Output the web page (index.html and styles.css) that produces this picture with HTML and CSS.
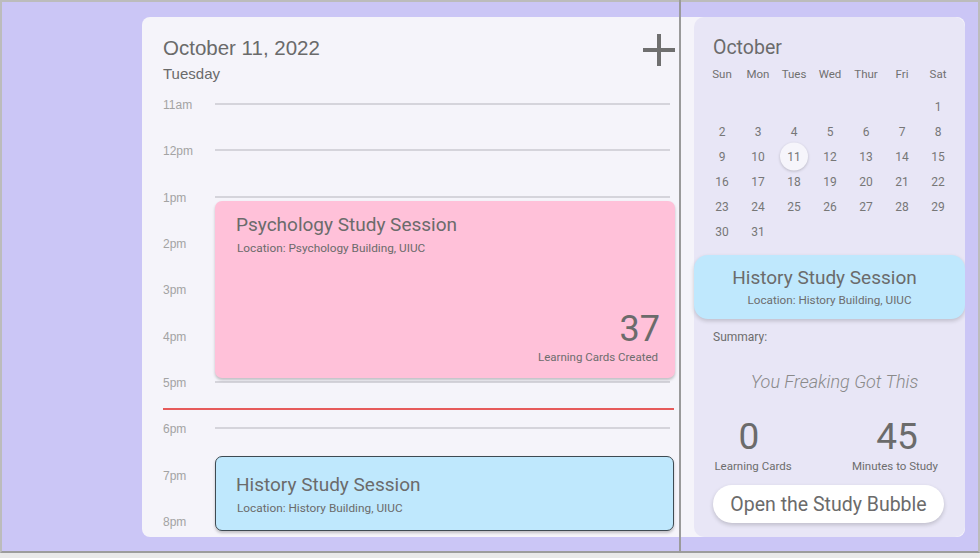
FILE: index.html
```html
<!DOCTYPE html>
<html>
<head>
<meta charset="utf-8">
<link rel="stylesheet" href="styles.css">
</head>
<body>
<div class="screen">
  <div class="device">
    <div class="card">
      <section class="day">
        <header class="day-head">
          <div class="day-titles">
            <h1 class="date">October 11, 2022</h1>
            <div class="weekday">Tuesday</div>
          </div>
          <svg class="plus" width="34" height="34" viewBox="0 0 34 34"><path d="M17 1V33M1 17H33" stroke="#6f6f6f" stroke-width="4" fill="none"/></svg>
        </header>
        <div class="timeline">
          <div class="hour"><span class="hl">11am</span><span class="hline"></span></div>
          <div class="hour"><span class="hl">12pm</span><span class="hline"></span></div>
          <div class="hour"><span class="hl">1pm</span><span class="hline"></span></div>
          <div class="hour"><span class="hl">2pm</span><span class="hline"></span></div>
          <div class="hour"><span class="hl">3pm</span><span class="hline"></span></div>
          <div class="hour"><span class="hl">4pm</span><span class="hline"></span></div>
          <div class="hour"><span class="hl">5pm</span><span class="hline"></span></div>
          <div class="hour"><span class="hl">6pm</span><span class="hline"></span></div>
          <div class="hour"><span class="hl">7pm</span><span class="hline"></span></div>
          <div class="hour"><span class="hl">8pm</span><span class="hline"></span></div>
          <div class="now"></div>
          <div class="event psych">
            <div class="ev-title">Psychology Study Session</div>
            <div class="ev-loc">Location: Psychology Building, UIUC</div>
            <div class="ev-stat">
              <div class="ev-num">37</div>
              <div class="ev-lbl">Learning Cards Created</div>
            </div>
          </div>
          <div class="event hist">
            <div class="ev-title">History Study Session</div>
            <div class="ev-loc">Location: History Building, UIUC</div>
          </div>
        </div>
      </section>
      <aside class="side">
        <div class="month">October</div>
        <div class="cal">
          <span class="wd">Sun</span><span class="wd">Mon</span><span class="wd">Tues</span><span class="wd">Wed</span><span class="wd">Thur</span><span class="wd">Fri</span><span class="wd">Sat</span>
          <span></span><span></span><span></span><span></span><span></span><span></span><span class="d">1</span>
          <span class="d">2</span><span class="d">3</span><span class="d">4</span><span class="d">5</span><span class="d">6</span><span class="d">7</span><span class="d">8</span>
          <span class="d">9</span><span class="d">10</span><span class="d sel">11</span><span class="d">12</span><span class="d">13</span><span class="d">14</span><span class="d">15</span>
          <span class="d">16</span><span class="d">17</span><span class="d">18</span><span class="d">19</span><span class="d">20</span><span class="d">21</span><span class="d">22</span>
          <span class="d">23</span><span class="d">24</span><span class="d">25</span><span class="d">26</span><span class="d">27</span><span class="d">28</span><span class="d">29</span>
          <span class="d">30</span><span class="d">31</span>
        </div>
        <div class="next">
          <div class="next-title">History Study Session</div>
          <div class="next-loc">Location: History Building, UIUC</div>
        </div>
        <div class="summary">Summary:</div>
        <div class="quote">You Freaking Got This</div>
        <div class="stats">
          <div class="stat s1"><div class="num">0</div><div class="lbl">Learning Cards</div></div>
          <div class="stat s2"><div class="num">45</div><div class="lbl">Minutes to Study</div></div>
        </div>
        <button class="bubble">Open the Study Bubble</button>
      </aside>
    </div>
    <div class="divider"></div>
  </div>
</div>
</body>
</html>
```
FILE: styles.css
```css
* { box-sizing: border-box; }
html, body { margin: 0; padding: 0; }
body { background: #e9e9e9; font-family: Roboto, "Liberation Sans", sans-serif; color: #6d6d6d; }
.screen { width: 980px; height: 558px; position: relative; overflow: hidden; }
.device {
  width: 980px; height: 553px;
  border: 2px solid #bcbcbc; border-bottom-color: #9c9c9c;
  background: #cbc6f6;
  position: relative;
  padding: 15px 0 0 140px;
}
.card {
  width: 823px; height: 520px;
  background: #f5f4fa;
  border-radius: 8px;
  display: flex;
  overflow: hidden;
}
.day { width: 552px; padding-left: 21px; }
.day-head { display: flex; justify-content: space-between; align-items: flex-start; padding-top: 19px; height: 64px; }
.date { margin: 0; font-family: "Liberation Sans", Arial, sans-serif; font-weight: 400; font-size: 20.5px; line-height: 24px; color: #6a6a6a; }
.weekday { font-family: "Liberation Sans", Arial, sans-serif; font-size: 15px; line-height: 18px; margin-top: 5px; color: #6a6a6a; }
.plus { margin-top: -3px; margin-right: 18px; }
.timeline { position: relative; width: 512px; }
.hour { height: 46.33px; display: flex; align-items: center; }
.hl { width: 52px; font-family: "Liberation Sans", Arial, sans-serif; font-size: 12px; color: #a3a3a3; padding-top: 2px; }
.hline { width: 455px; height: 2px; background: #d5d4db; }
.now { position: absolute; left: 0; top: 327px; width: 511px; height: 1.5px; background: #e65a5a; }
.event { position: absolute; left: 52px; border-radius: 7px; box-shadow: 0 2px 3px rgba(0,0,0,0.22); padding: 13px 20px 0 21px; }
.psych { top: 120px; width: 460px; height: 177px; background: #ffc1d9; display: flex; flex-direction: column; }
.hist { top: 375px; width: 459px; height: 75px; background: #bfe8fd; border: 1px solid #3e4a52; padding-top: 17px; padding-left: 20px; }
.ev-title { font-size: 19px; line-height: 22px; color: #6b6b6b; }
.ev-loc { font-size: 11.8px; line-height: 14px; margin-top: 5px; margin-left: 1px; color: #6b6b6b; }
.ev-stat { margin-top: auto; padding-bottom: 14px; text-align: right; margin-right: -5px; }
.ev-num { font-size: 36px; line-height: 38px; color: #6b6b6b; margin-bottom: 2px; }
.ev-lbl { font-size: 11.5px; line-height: 14px; margin-right: 2px; }

.side { width: 271px; background: #e8e6f6; border-radius: 10px; padding: 20px 0 0 0; display: flex; flex-direction: column; }
.month { font-size: 19.5px; line-height: 22px; padding-left: 19px; color: #6b6b6b; }
.cal { margin-left: 10px; width: 252px; display: grid; grid-template-columns: repeat(7, 36px); grid-template-rows: 20px repeat(6, 25px); margin-top: 5px; }
.cal > span { display: flex; align-items: center; justify-content: center; font-size: 12px; color: #777; }
.cal .wd { font-size: 11.5px; color: #707070; }
.cal > span:nth-child(n+8) { transform: translateY(9.5px); }
.cal .sel { position: relative; isolation: isolate; }
.cal .sel::before { content: ""; position: absolute; width: 28px; height: 28px; border-radius: 50%; background: #f6f5fb; box-shadow: 0 1px 3px rgba(0,0,0,0.2); left: 50%; top: 50%; transform: translate(-50%, -50%); z-index: -1; }
.next { margin-top: 21px; height: 64px; background: #bfe8fd; border-radius: 14px; box-shadow: 0 2px 4px rgba(0,0,0,0.18); text-align: center; padding-top: 12px; }
.next-title { font-size: 19px; line-height: 22px; color: #6b6b6b; margin-left: -10px; }
.next-loc { font-size: 11.7px; line-height: 14px; margin-top: 4px; }
.summary { font-size: 12px; line-height: 14px; padding-left: 19px; margin-top: 11px; }
.quote { font-size: 18px; font-style: italic; font-weight: 300; color: #8a8a8a; text-align: center; margin-top: 27px; line-height: 22px; padding-left: 10px; }
.stats { display: flex; margin-top: 24px; }
.stat { text-align: center; }
.s1 { margin-left: 19px; width: 80px; }
.s1 .num { padding-right: 8px; }
.s2 { margin-left: 56px; width: 92px; }
.s2 .num { padding-left: 4px; }
.num { font-size: 37px; line-height: 40px; color: #6b6b6b; }
.lbl { font-size: 11.5px; line-height: 14px; margin-top: 2px; }
.bubble {
  margin: 12px 0 0 19px; width: 231px; height: 38px; border: 0; border-radius: 19px;
  background: #fff; box-shadow: 0 2px 4px rgba(0,0,0,0.18);
  font-family: Roboto, sans-serif; font-size: 19.5px; color: #6b6b6b; padding: 0;
}
.divider { position: absolute; left: 677px; top: -2px; width: 2px; height: 553px; background: #9a9a9a; }
```
